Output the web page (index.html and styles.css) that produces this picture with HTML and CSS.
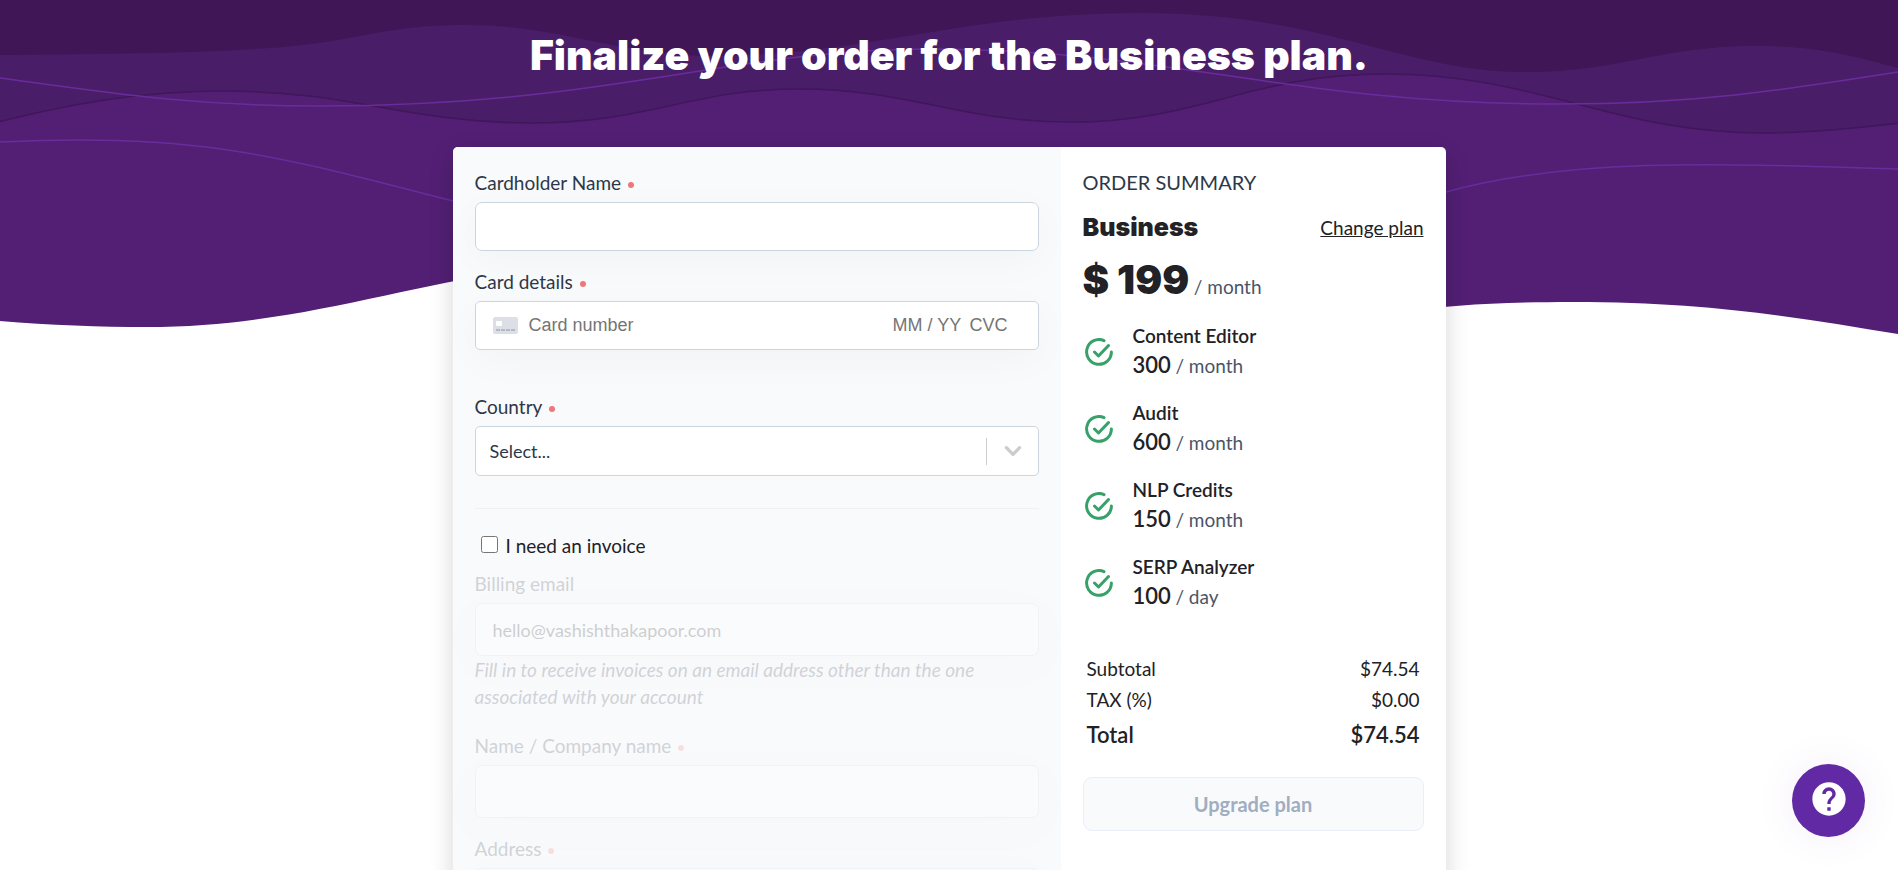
FILE: index.html
```html
<!DOCTYPE html>
<html lang="en">
<head>
<meta charset="utf-8">
<meta name="viewport" content="width=device-width, initial-scale=1">
<title>Finalize your order</title>
<link rel="stylesheet" href="styles.css">
</head>
<body>
<div class="page">
  <svg class="waves" viewBox="0 0 1898 336" preserveAspectRatio="none" aria-hidden="true">
    <path fill="#521f74" d="M0 0H1898V334C1800 318 1710 302 1573 302C1500 302 1450 305 1400 312L520 270C400 286 290 327 147 327C100 327 50 325 0 321Z"/>
    <path fill="#4a1d69" stroke="#41165a" stroke-width="1.5" d="M-2 -2H1900V123C1850 129 1810 133 1765 133C1610 133 1540 74 1385 74C1250 74 1200 122 1071 122C960 122 910 89 800 89C690 89 650 123 531 123C410 123 350 91 224 91C140 91 70 104 -2 122Z"/>
    <path fill="#411656" d="M0 0H1898V68C1850 55 1815 46 1756 46C1660 46 1620 72 1527 72C1400 72 1330 13 1140 13C960 13 870 56 710 56C620 56 560 25 465 25C380 25 360 42 270 48C180 54 90 54 0 55Z"/>
    <g fill="none" stroke="#6a2c9c" stroke-width="1.5">
      <path d="M0 78C110 93 190 106 320 106C610 106 730 49 930 49C1170 49 1290 104 1560 104C1700 104 1790 89 1898 72"/>
      <path d="M0 142C200 132 280 157 453 201"/>
      <path d="M1446 192C1570 158 1710 163 1898 169"/>
    </g>
  </svg>

  <header class="hero">
    <h1 class="hero-title">Finalize your order for the Business plan.</h1>
  </header>

  <main class="checkout">
    <form class="payment" id="payment">
      <div class="field">
        <label class="label" for="holder">Cardholder Name<span class="required"></span></label>
        <input class="input" id="holder" type="text">
      </div>

      <div class="field field-card">
        <label class="label" for="card-number">Card details<span class="required"></span></label>
        <div class="card-box">
          <svg class="card-icon" viewBox="0 0 25 17" aria-hidden="true">
            <rect width="25" height="17" rx="2" fill="#dce0e6"/>
            <rect x="3" y="4" width="6" height="5" rx="1" fill="#fff"/>
            <path d="M3 13H23" stroke="#b3bac5" stroke-width="2" stroke-dasharray="4 1"/>
          </svg>
          <input class="card-input card-number" id="card-number" type="text" placeholder="Card number">
          <input class="card-input card-expiry" type="text" placeholder="MM / YY" aria-label="Expiry date">
          <input class="card-input card-cvc" type="text" placeholder="CVC" aria-label="CVC">
        </div>
      </div>

      <div class="field field-country">
        <label class="label" for="country">Country<span class="required"></span></label>
        <div class="select-box">
          <select class="select" id="country"><option>Select...</option></select>
          <span class="select-divider"></span>
          <svg class="chevron" viewBox="0 0 20 20" aria-hidden="true"><path d="M4 7L10 13L16 7" fill="none" stroke="#ccc" stroke-width="3" stroke-linecap="round" stroke-linejoin="round"/></svg>
        </div>
      </div>

      <hr class="divider">

      <div class="check-row">
        <input class="checkbox" id="invoice" type="checkbox">
        <label for="invoice">I need an invoice</label>
      </div>

      <div class="invoice">
        <div class="field">
          <label class="label" for="email">Billing email</label>
          <input class="input input-tall" id="email" type="email" placeholder="hello@vashishthakapoor.com" disabled>
          <p class="hint">Fill in to receive invoices on an email address other than the one associated with your account</p>
        </div>
        <div class="field">
          <label class="label" for="company">Name / Company name<span class="required"></span></label>
          <input class="input input-tall" id="company" type="text" disabled>
        </div>
        <div class="field">
          <label class="label" for="address">Address<span class="required"></span></label>
          <input class="input input-tall" id="address" type="text" disabled>
        </div>
      </div>
    </form>

    <aside class="summary">
      <h2 class="summary-title">ORDER SUMMARY</h2>
      <div class="plan">
        <h3 class="plan-name">Business</h3>
        <a class="plan-change" href="#">Change plan</a>
      </div>
      <p class="price"><strong class="price-value">$ 199</strong> <span class="unit">/ month</span></p>

      <ul class="features">
        <li class="feature">
          <svg class="tick" viewBox="0 0 28 28" aria-hidden="true"><path d="M19 2.6A12.4 12.4 0 1 0 26.4 14M9.5 14L13.5 18L23.5 7.5"/></svg>
          <div><div class="feature-name">Content Editor</div><div class="quota"><strong class="quota-value">300</strong> <span class="unit">/ month</span></div></div>
        </li>
        <li class="feature">
          <svg class="tick" viewBox="0 0 28 28" aria-hidden="true"><path d="M19 2.6A12.4 12.4 0 1 0 26.4 14M9.5 14L13.5 18L23.5 7.5"/></svg>
          <div><div class="feature-name">Audit</div><div class="quota"><strong class="quota-value">600</strong> <span class="unit">/ month</span></div></div>
        </li>
        <li class="feature">
          <svg class="tick" viewBox="0 0 28 28" aria-hidden="true"><path d="M19 2.6A12.4 12.4 0 1 0 26.4 14M9.5 14L13.5 18L23.5 7.5"/></svg>
          <div><div class="feature-name">NLP Credits</div><div class="quota"><strong class="quota-value">150</strong> <span class="unit">/ month</span></div></div>
        </li>
        <li class="feature">
          <svg class="tick" viewBox="0 0 28 28" aria-hidden="true"><path d="M19 2.6A12.4 12.4 0 1 0 26.4 14M9.5 14L13.5 18L23.5 7.5"/></svg>
          <div><div class="feature-name">SERP Analyzer</div><div class="quota"><strong class="quota-value">100</strong> <span class="unit">/ day</span></div></div>
        </li>
      </ul>

      <table class="totals">
        <tbody>
          <tr><th scope="row">Subtotal</th><td>$74.54</td></tr>
          <tr><th scope="row">TAX (%)</th><td>$0.00</td></tr>
          <tr class="total"><th scope="row">Total</th><td>$74.54</td></tr>
        </tbody>
      </table>

      <button class="upgrade" type="submit" form="payment" disabled>Upgrade plan</button>
    </aside>
  </main>

  <button class="help" type="button" aria-label="Help">
    <svg class="help-icon" viewBox="0 0 24 24" aria-hidden="true"><path fill="#fff" d="M12 2C6.48 2 2 6.48 2 12s4.48 10 10 10 10-4.48 10-10S17.52 2 12 2zm1 17h-2v-2h2v2zm2.07-7.75l-.9.92C13.45 12.9 13 13.5 13 15h-2v-.5c0-1.1.45-2.1 1.17-2.83l1.24-1.26c.37-.36.59-.86.59-1.41 0-1.1-.9-2-2-2s-2 .9-2 2H8c0-2.21 1.79-4 4-4s4 1.79 4 4c0 .88-.36 1.68-.93 2.25z"/></svg>
  </button>
</div>
</body>
</html>
```

FILE: styles.css
```css
*,
*::before,
*::after {
  box-sizing: border-box;
}

body {
  margin: 0;
  background: #fff;
  color: #212126;
  font-family: Lato, sans-serif;
  font-size: 18px;
  line-height: 27px;
}

h1, h2, h3, p, ul {
  margin: 0;
  padding: 0;
}

input, select, button {
  font: inherit;
  color: inherit;
}

.page {
  position: relative;
  height: 100vh;
  overflow: hidden;
}

.waves {
  position: absolute;
  top: 0;
  left: 0;
  width: 100%;
  height: 336px;
}

.hero {
  position: relative;
  padding: 28px 24px 65px;
  text-align: center;
}

.hero-title,
.plan-name,
.price-value {
  font-family: Inter, Lato, sans-serif;
  font-weight: 900;
}

.hero-title {
  color: #fff;
  font-size: 41px;
  line-height: 54px;
}

.checkout {
  position: relative;
  display: grid;
  grid-template-columns: 608fr 385fr;
  width: 100%;
  max-width: 993px;
  margin: 0 auto;
  overflow: hidden;
  background: #fff;
  border-radius: 5px;
  box-shadow: 0 8px 24px rgba(0, 0, 0, 0.16);
}

.payment {
  padding: 22px 22px 40px;
  background: #f9fafc;
}

.field {
  margin-bottom: 17px;
}

.field-card {
  margin-bottom: 43px;
}

.field-country {
  margin-bottom: 0;
}

.label {
  display: flex;
  align-items: center;
  margin-bottom: 6px;
  color: #2d3748;
  font-size: 19px;
}

.required {
  width: 6px;
  height: 6px;
  margin: 4px 0 0 7px;
  border-radius: 50%;
  background: #ee7777;
}

.input,
.card-box,
.select-box {
  width: 100%;
  height: 49px;
  border: 1px solid #cbd5e0;
  border-radius: 7px;
  background: #fff;
}

.input {
  display: block;
  padding: 0 17px;
  box-shadow: 0 10px 40px rgba(0, 0, 0, 0.03);
}

.input-tall {
  height: 53px;
}

.input::placeholder {
  color: #212126;
}

.card-box {
  display: flex;
  align-items: center;
  padding: 0 22px 0 17px;
  border-radius: 5px;
  box-shadow: 0 10px 40px rgba(0, 0, 0, 0.03);
}

.card-icon {
  flex: none;
  width: 25px;
  height: 17px;
  margin-right: 11px;
}

.card-input {
  height: 30px;
  padding: 0;
  border: 0;
  background: none;
  font-family: "Liberation Sans", sans-serif;
}

.card-input::placeholder {
  color: #757575;
}

.card-number {
  flex: 1;
  min-width: 0;
}

.card-expiry {
  width: 77px;
}

.card-cvc {
  width: 46px;
}

.select-box {
  display: flex;
  align-items: center;
  height: 50px;
  border-radius: 5px;
}

.select {
  flex: 1;
  height: 48px;
  padding: 0 14px;
  border: 0;
  background: none;
  appearance: none;
  color: #2d3748;
}

.select-divider {
  width: 1px;
  height: 27px;
  background: #ccc;
}

.chevron {
  width: 22px;
  height: 22px;
  margin: 0 14px 0 15px;
}

.divider {
  margin: 32px 0 23px;
  border: 0;
  border-top: 1px solid #edf2f7;
}

.check-row {
  display: flex;
  gap: 8px;
  margin-bottom: 11px;
  padding-left: 6px;
  font-size: 19px;
}

.checkbox {
  width: 17px;
  height: 17px;
  margin: 4px 0 0;
}

.invoice {
  opacity: 0.2;
}

.hint {
  margin-bottom: 22px;
  color: #2d3748;
  font-size: 19px;
  font-style: italic;
}

.summary {
  padding: 22px;
}

.summary-title {
  color: #2d3748;
  font-size: 20px;
  font-weight: 400;
}

.plan {
  display: flex;
  align-items: center;
  justify-content: space-between;
  margin-top: 13px;
}

.plan-name {
  font-size: 25px;
  line-height: 36px;
}

.plan-change {
  color: #212126;
  font-size: 19px;
}

.price {
  margin-top: 8px;
  line-height: 54px;
}

.price-value {
  font-size: 40px;
}

.unit {
  color: #4a5568;
  font-size: 19px;
}

.features {
  display: grid;
  gap: 17px;
  margin-top: 8px;
  list-style: none;
}

.feature {
  display: flex;
  align-items: center;
  gap: 20px;
}

.tick {
  width: 28px;
  height: 28px;
  margin-left: 2px;
  fill: none;
  stroke: #38a169;
  stroke-width: 3;
  stroke-linecap: round;
  stroke-linejoin: round;
}

.feature-name {
  font-size: 19px;
  font-weight: 600;
}

.quota {
  line-height: 32px;
}

.quota-value {
  font-size: 22px;
  font-weight: 600;
}

.totals {
  width: 100%;
  margin-top: 40px;
  border-spacing: 0;
  font-size: 19px;
}

.totals th,
.totals td {
  padding: 2px 4px;
  font-weight: 400;
  text-align: left;
}

.totals td {
  text-align: right;
}

.totals .total th,
.totals .total td {
  padding: 6px 4px;
  font-size: 22px;
  font-weight: 600;
}

.upgrade {
  display: block;
  width: 100%;
  height: 54px;
  margin-top: 23px;
  border: 1px solid #e8eff6;
  border-radius: 9px;
  background: #f9fafc;
  color: #a0aec0;
  font-size: 20px;
  font-weight: 700;
}

.help {
  position: fixed;
  right: 33px;
  bottom: 33px;
  display: flex;
  align-items: center;
  justify-content: center;
  width: 73px;
  height: 73px;
  padding: 0 0 4px;
  border: 0;
  border-radius: 50%;
  background: #6229a4;
  box-shadow: 0 0 40px rgba(98, 41, 164, 0.08);
}

.help-icon {
  width: 40px;
  height: 40px;
}
```
